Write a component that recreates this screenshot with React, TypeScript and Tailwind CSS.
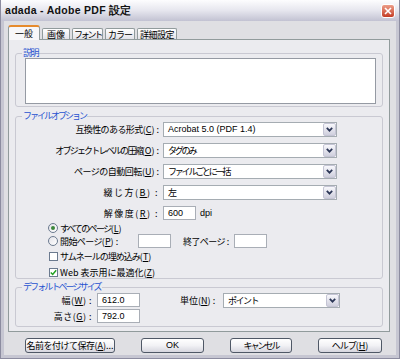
import React from "react";

const jp = "font-['Noto_Sans_CJK_JP','Liberation_Sans',sans-serif] whitespace-nowrap";
const lat = "font-['Liberation_Sans',sans-serif]";

function Chevron() {
  return (
    <svg width="7" height="5" viewBox="0 0 7 5">
      <polyline points="0.8,0.8 3.5,3.7 6.2,0.8" fill="none" stroke="#2b3656" strokeWidth="1.7" />
    </svg>
  );
}

function Select({ value, className, text = "" }: { value: string; className: string; text?: string }) {
  return (
    <div className={`flex h-[15px] items-center border border-[#a5acb2] bg-white ${className}`}>
      <span className={`flex-1 pl-[4px] text-[9px] leading-[11px] ${text}`}>{value}</span>
      <div className="flex h-full w-[13px] items-center justify-center rounded-[2px] border border-[#c4c4d4] bg-gradient-to-b from-[#f8f8fc] to-[#cfcfdd]">
        <Chevron />
      </div>
    </div>
  );
}

function Field({ value, className }: { value?: string; className: string }) {
  return (
    <div className={`flex items-center border border-[#a9aeb6] bg-white pl-[4px] text-[9px] leading-[11px] ${lat} ${className}`}>
      {value}
    </div>
  );
}

function Radio({ on }: { on?: boolean }) {
  return (
    <span className="flex h-[10px] w-[10px] shrink-0 items-center justify-center rounded-full border border-[#6b7a8f] bg-gradient-to-br from-[#e2e2e8] to-white">
      {on && <span className="h-[4px] w-[4px] rounded-full bg-[#3b873b]" />}
    </span>
  );
}

function Check({ on }: { on?: boolean }) {
  return (
    <span className="flex h-[9px] w-[9px] shrink-0 items-center justify-center border border-[#6b7a8f] bg-white">
      {on && (
        <svg width="7" height="7" viewBox="0 0 7 7">
          <polyline points="0.8,3.4 2.7,5.4 6.2,1.2" fill="none" stroke="#22a022" strokeWidth="1.5" />
        </svg>
      )}
    </span>
  );
}

function Btn({ children, className }: { children: React.ReactNode; className: string }) {
  return (
    <div
      className={`flex h-[15px] items-center justify-center rounded-[3px] border border-[#4f5866] bg-gradient-to-b from-white via-[#f2f2f5] to-[#d6d6de] text-[9px] leading-[11px] ${className}`}
    >
      {children}
    </div>
  );
}

// label: Japanese part (own tracking) + accelerator key + colon
function Label({ text, k, t = "", colon = true, className }: { text: string; k?: string; t?: string; colon?: boolean; className: string }) {
  return (
    <span className={`shrink-0 text-[9px] leading-[11px] ${className}`}>
      <span className={t}>{text}</span>
      {k && (
        <>
          (<u>{k}</u>)
        </>
      )}
      {colon && " :"}
    </span>
  );
}

function Tab({ children, className }: { children: React.ReactNode; className: string }) {
  return (
    <div
      className={`flex h-[11px] items-center justify-center rounded-t-[2px] border-x border-t border-[#919b9c] bg-gradient-to-b from-white to-[#e2e2e8] pt-[1px] text-[9px] leading-[10px] ${className}`}
    >
      {children}
    </div>
  );
}

export default function App() {
  return (
    <div className={`flex h-[359px] w-[400px] flex-col bg-[#8c8ca0] px-[1px] pb-[1px] text-black ${jp}`}>
      {/* title bar */}
      <div className="flex h-[21px] items-center bg-gradient-to-b from-[#fdfdfe] via-[#e6e6ee] to-[#c2c2d2] pl-[4px] pr-[4px]">
        <span className={`flex-1 text-[10.5px] font-bold leading-none tracking-[0.3px] text-[#111] ${lat}`}>
          adada - Adobe PDF 設定
        </span>
        <div className="flex h-[14px] w-[14px] items-center justify-center rounded-[3px] border border-white bg-gradient-to-b from-[#eb9c88] to-[#c43a22]">
          <svg width="8" height="8" viewBox="0 0 8 8">
            <path d="M1 1L7 7M7 1L1 7" stroke="white" strokeWidth="1.6" />
          </svg>
        </div>
      </div>

      {/* body */}
      <div className="flex flex-1 flex-col border-x-[3px] border-b-[3px] border-[#c6c6d2] bg-[#dfdfe3] px-[4px] pt-[4px]">
        {/* tabs */}
        <div className="flex h-[14px] items-end gap-[2px]">
          <div className="relative z-10 -mb-[1px] flex h-[15px] w-[32px] items-center justify-center rounded-t-[3px] border-x border-t-2 border-[#919b9c] border-t-[#e68b2c] bg-[#f7f7f9] text-[9px] leading-[10px]">
            一般
          </div>
          <Tab className="w-[28px]">画像</Tab>
          <Tab className="w-[31px] tracking-[-2.2px]">フォント</Tab>
          <Tab className="w-[30px] tracking-[-1px]">カラー</Tab>
          <Tab className="w-[40px] tracking-[-0.5px]">詳細設定</Tab>
        </div>

        {/* panel */}
        <div className="flex h-[293px] w-[382px] flex-col border border-[#919b9c] bg-[#ebebef] px-[6px] pt-[8px]">
          {/* 説明 */}
          <fieldset className="rounded-[3px] border border-[#c9c9d2] pb-[2px]">
            <legend className="ml-[6px] px-[1px] text-[9px] leading-[10px] tracking-[-1.5px] text-[#1f52cf]">説明</legend>
            <div className="ml-[9px] h-[46px] w-[351px] border border-[#959aa3] bg-white" />
          </fieldset>

          {/* ファイルオプション */}
          <fieldset className="mt-[4px] rounded-[3px] border border-[#c9c9d2]">
            <legend className="ml-[6px] px-[1px] text-[9px] leading-[10px] tracking-[-2px] text-[#1f52cf]">
              ファイルオプション
            </legend>
            <div className="flex flex-col">
              <div className="mt-[1px] flex h-[15px] items-center">
                <Label text="互換性のある形式" k="C" t="tracking-[-0.6px]" className="w-[143px] text-right" />
                <Select value="Acrobat 5.0 (PDF 1.4)" text={lat} className="ml-[4px] w-[174px]" />
              </div>
              <div className="mt-[6px] flex h-[15px] items-center">
                <Label text="オブジェクトレベルの圧縮" k="O" t="tracking-[-1.8px]" className="w-[143px] text-right" />
                <Select value="タグのみ" text="tracking-[-2.2px]" className="ml-[4px] w-[174px]" />
              </div>
              <div className="mt-[6px] flex h-[15px] items-center">
                <Label text="ページの自動回転" k="U" t="tracking-[-0.5px]" className="w-[143px] text-right" />
                <Select value="ファイルごとに一括" text="tracking-[-2.2px]" className="ml-[4px] w-[174px]" />
              </div>
              <div className="mt-[6px] flex h-[15px] items-center">
                <Label text="綴じ方" k="B" className="w-[143px] text-right tracking-[1.5px]" />
                <Select value="左" className="ml-[4px] w-[174px]" />
              </div>
              <div className="mt-[6px] flex h-[14px] items-center">
                <Label text="解像度" k="R" className="w-[143px] text-right tracking-[1.5px]" />
                <Field value="600" className="ml-[4px] h-[14px] w-[33px]" />
                <span className={`ml-[4px] text-[9px] leading-[11px] ${lat}`}>dpi</span>
              </div>

              <div className="ml-[32px] mt-[2px] flex h-[12px] items-center gap-[2px]">
                <Radio on />
                <Label text="すべてのページ" k="L" colon={false} t="tracking-[-1.6px]" className="" />
              </div>
              <div className="ml-[32px] flex h-[14px] items-center">
                <Radio />
                <Label text="開始ページ" k="P" t="tracking-[-0.6px]" className="ml-[2px] w-[78px]" />
                <Field className="h-[14px] w-[33px]" />
                <Label text="終了ページ" t="tracking-[-0.6px]" className="ml-[12px] w-[51px]" />
                <Field className="h-[14px] w-[33px]" />
              </div>
              <div className="ml-[33px] mt-[2px] flex h-[12px] items-center gap-[2px]">
                <Check />
                <Label text="サムネールの埋め込み" k="T" colon={false} t="tracking-[-1px]" className="" />
              </div>
              <div className="ml-[33px] mt-[4px] flex h-[12px] items-center gap-[2px]">
                <Check on />
                <Label text="Web 表示用に最適化" k="Z" colon={false} className="" />
              </div>
            </div>
          </fieldset>

          {/* デフォルトページサイズ */}
          <fieldset className="mt-[3px] rounded-[3px] border border-[#c9c9d2] pb-[3px]">
            <legend className="ml-[6px] px-[1px] text-[9px] leading-[10px] tracking-[-1.9px] text-[#1f52cf]">
              デフォルトページサイズ
            </legend>
            <div className="flex flex-col">
              <div className="mt-[1px] flex h-[14px] items-center">
                <Label text="幅" k="W" className="w-[76px] text-right tracking-[0.5px]" />
                <Field value="612.0" className="ml-[5px] h-[14px] w-[43px]" />
                <Label text="単位" k="N" className="ml-[40px] w-[43px]" />
                <Select value="ポイント" text="tracking-[-1.5px]" className="w-[117px]" />
              </div>
              <div className="mt-[2px] flex h-[14px] items-center">
                <Label text="高さ" k="G" className="w-[76px] text-right tracking-[0.5px]" />
                <Field value="792.0" className="ml-[5px] h-[14px] w-[43px]" />
              </div>
            </div>
          </fieldset>
        </div>

        {/* buttons */}
        <div className="ml-[17px] mt-[6px] flex w-[357px] justify-between">
          <Btn className="w-[90px]">
            <span className="tracking-[-0.5px]">名前を付けて保存</span>(<u>A</u>)...
          </Btn>
          <Btn className={`w-[63px] ${lat}`}>OK</Btn>
          <Btn className="w-[62px] tracking-[-2px]">キャンセル</Btn>
          <Btn className="w-[64px]">
            <span className="tracking-[-1px]">ヘルプ</span>(<u>H</u>)
          </Btn>
        </div>
      </div>
    </div>
  );
}
